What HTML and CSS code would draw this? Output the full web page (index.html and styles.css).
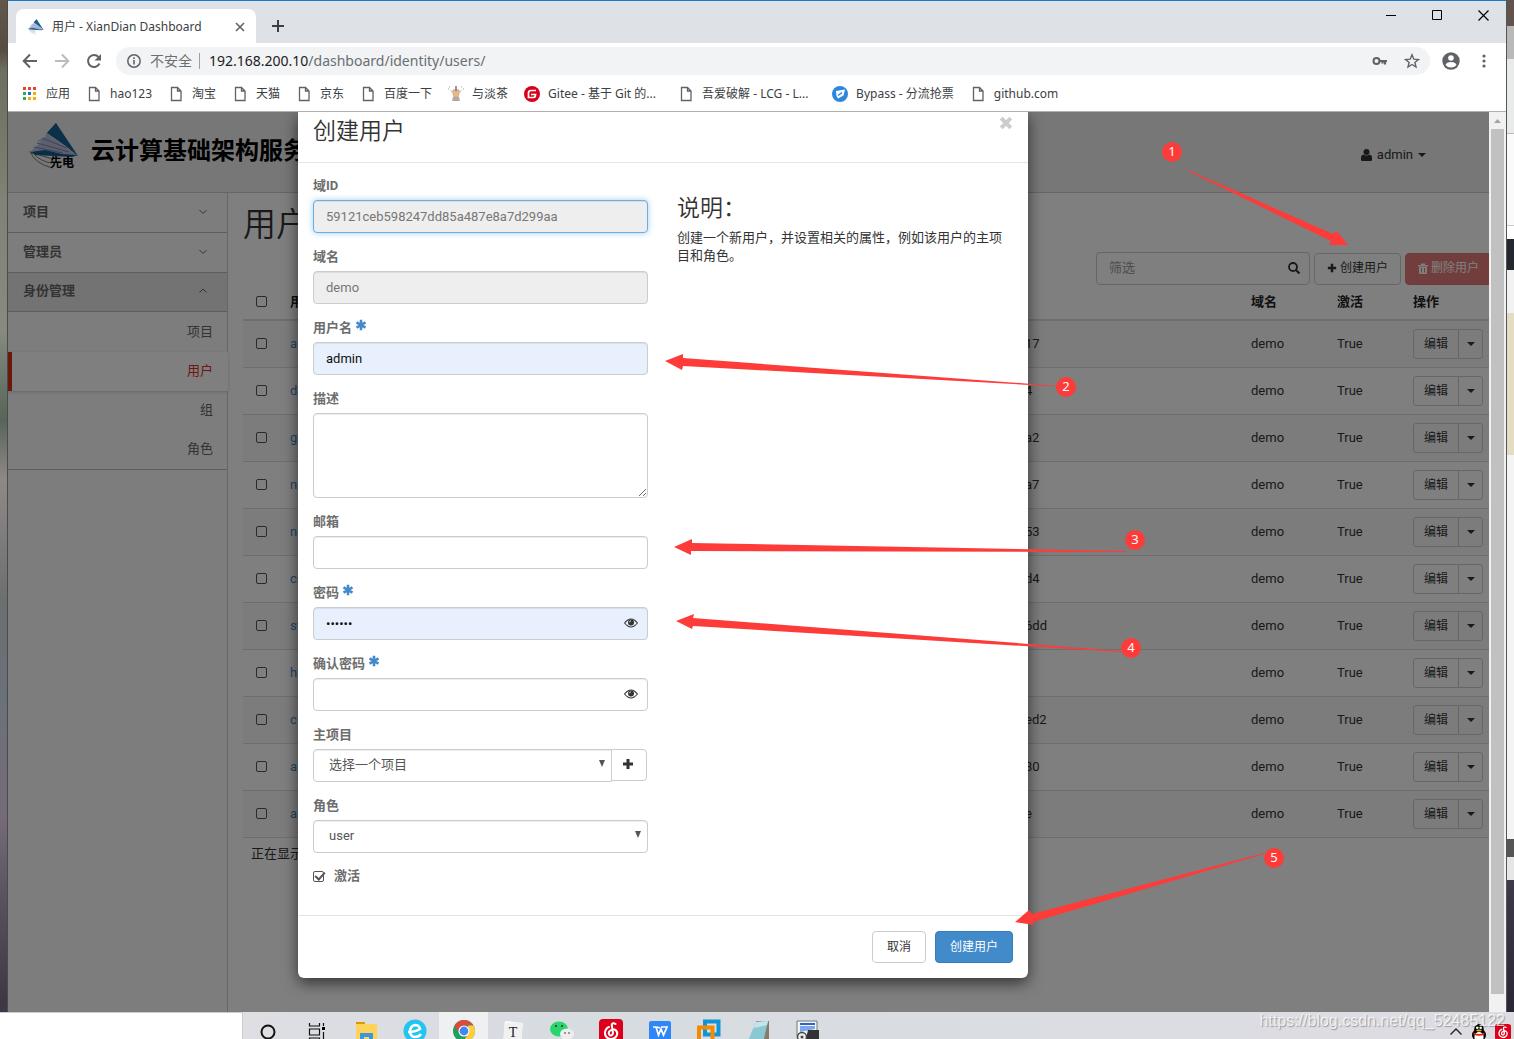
FILE: index.html
```html
<!DOCTYPE html>
<html lang="zh-CN">
<head>
<meta charset="utf-8">
<title>用户 - XianDian Dashboard</title>
<link rel="stylesheet" href="styles.css">
</head>
<body>
<svg class="symbols" aria-hidden="true">
  <symbol id="doc" viewBox="0 0 16 16"><path d="M3.500 1.500h6l3.500 3.500v9.500h-9.500zM9.500 1.500v3.500h3.500" fill="none" stroke="#5f6368" stroke-width="1.300"/></symbol>
  <symbol id="logo" viewBox="0 0 50 48">
    <path d="M27 0 49 33 26 13 18 10z" fill="#17608f"/>
    <path d="M17 10 48 32 24 31 2 28 12 19 8 18 16 14z" fill="#b9bfdc"/>
    <path d="M27 0 33 17 49 33 38 24 18 10z" fill="#17608f"/>
    <path d="M13 15 38 25M8 20 40 29M5 24 34 30" stroke="#7d84ad" stroke-width="1" fill="none"/>
    <path d="M1 29 16 27 33 31 49 32 43 34 6 32z" fill="#115a8c"/>
    <path d="M1 28Q5 40 23 45M4 30Q12 39 23 40M10 32 24 36" stroke="#777" fill="none"/>
  </symbol>
  <symbol id="star" viewBox="0 0 12 12"><path d="M6 .8v10.400M1.500 3.400l9 5.200M10.500 3.400l-9 5.200" stroke="#428bca" stroke-width="2.600"/></symbol>
  <symbol id="eye" viewBox="0 0 14 10"><path d="M.6 5Q7-3 13.400 5 7 13 .6 5z" fill="none" stroke="#333" stroke-width="1.100"/><circle cx="7" cy="4.500" r="3" fill="#333"/><path d="M5.400 4.300Q5.500 3 7 2.900" fill="none" stroke="#fff" stroke-width=".8"/></symbol>
  <symbol id="plus" viewBox="0 0 12 12"><path d="M6 1v10M1 6h10" stroke="#333" stroke-width="3"/></symbol>
  <symbol id="netease" viewBox="0 0 24 24"><rect width="24" height="24" rx="4" fill="#dd001b"/><path d="M16.500 5Q13.500 3 12.700 6L14 14Q13.500 17 11 16.300 9 15 10.200 12.500 12 10 15.500 10.500 19 12 18 16 16 20.500 11 20 5.500 18.500 6 13 7 8.800 10 8" fill="none" stroke="#fff" stroke-width="2" stroke-linecap="round"/></symbol>
</svg>

<div class="desktop">
  <div class="edge edge-left"></div>

  <section class="window">
    <div class="tabstrip">
      <div class="tab">
        <svg class="i16"><use href="#logo"/></svg>
        <span class="tab-title">用户 - XianDian Dashboard</span>
        <button class="plain" aria-label="关闭标签页"><svg width="10" height="10" viewBox="0 0 10 10"><path d="M1 1l8 8M9 1l-8 8" stroke="#5f6368" stroke-width="1.600"/></svg></button>
      </div>
      <button class="plain newtab" aria-label="新标签页"><svg width="12" height="12" viewBox="0 0 12 12"><path d="M6 0v12M0 6h12" stroke="#3c4043" stroke-width="2"/></svg></button>
      <div class="wincontrols">
        <button class="plain" aria-label="最小化"><svg width="11" height="11"><path d="M0 5.500h10" stroke="#000"/></svg></button>
        <button class="plain" aria-label="最大化"><svg width="11" height="11"><path d="M.5.5h9v9h-9z" fill="none" stroke="#000"/></svg></button>
        <button class="plain" aria-label="关闭"><svg width="11" height="11"><path d="M.5.5l10 10M10.500.5l-10 10" stroke="#000" stroke-width="1.200"/></svg></button>
      </div>
    </div>

    <div class="toolbar">
      <button class="plain" aria-label="后退"><svg class="i16" viewBox="0 0 16 16"><path d="M15 8H2M8 1.500 1.700 8 8 14.500" fill="none" stroke="#5f6368" stroke-width="2"/></svg></button>
      <button class="plain" aria-label="前进"><svg class="i16" viewBox="0 0 16 16"><path d="M1 8h13M8 1.500 14.300 8 8 14.500" fill="none" stroke="#babcbe" stroke-width="2"/></svg></button>
      <button class="plain" aria-label="重新加载"><svg class="i16" viewBox="0 0 16 16"><path d="M13.500 10.500A6 6 0 1 1 12.500 4" fill="none" stroke="#5f6368" stroke-width="2"/><path d="M15 1v6.500H8.500z" fill="#5f6368"/></svg></button>
      <div class="omnibox">
        <svg width="14" height="14" viewBox="0 0 14 14"><circle cx="7" cy="7" r="6.200" fill="none" stroke="#5f6368" stroke-width="1.500"/><path d="M7 6v4.500M7 3.300v1.600" stroke="#5f6368" stroke-width="1.600"/></svg>
        <span class="insecure">不安全</span>
        <span class="url"><b>192.168.200.10</b>/dashboard/identity/users/</span>
        <svg class="i16" viewBox="0 0 16 16"><circle cx="4.500" cy="8" r="3" fill="none" stroke="#5f6368" stroke-width="2"/><path d="M7 8h8M13 8v3.500M10.500 8v2.500" stroke="#5f6368" stroke-width="2.200" fill="none"/></svg>
        <svg class="i16" viewBox="0 0 16 16"><path d="M8 1.800 9.800 6.200 14.500 6.500 10.900 9.500 12 14 8 11.500 4 14 5.100 9.500 1.500 6.500 6.200 6.200z" fill="none" stroke="#5f6368" stroke-width="1.400"/></svg>
      </div>
      <svg width="18" height="18" viewBox="0 0 18 18"><circle cx="9" cy="9" r="8.700" fill="#5f6368"/><circle cx="9" cy="6" r="2.800" fill="#fff"/><path d="M3.500 13Q4.500 10 9 10t5.500 3Q12.500 15.500 9 15.500T3.500 13z" fill="#fff"/></svg>
      <svg class="i16" viewBox="0 0 16 16"><g fill="#5f6368"><circle cx="8" cy="3" r="1.600"/><circle cx="8" cy="8" r="1.600"/><circle cx="8" cy="13" r="1.600"/></g></svg>
    </div>

    <nav class="bookmarks">
      <a href="#"><svg class="i16" viewBox="0 0 16 16"><path fill="#ea4335" d="M1 1h3v3H1zM6 1h3v3H6zM11 1h3v3h-3z"/><path fill="#34a853" d="M1 6h3v3H1zM1 11h3v3H1z"/><path fill="#1a73e8" d="M6 6h3v3H6z"/><path fill="#fbab05" d="M11 6h3v3h-3zM6 11h3v3H6zM11 11h3v3h-3z"/></svg>应用</a>
      <a href="#"><svg class="i16"><use href="#doc"/></svg>hao123</a>
      <a href="#"><svg class="i16"><use href="#doc"/></svg>淘宝</a>
      <a href="#"><svg class="i16"><use href="#doc"/></svg>天猫</a>
      <a href="#"><svg class="i16"><use href="#doc"/></svg>京东</a>
      <a href="#"><svg class="i16"><use href="#doc"/></svg>百度一下</a>
      <a href="#"><svg class="i16" viewBox="0 0 16 16"><path d="M5 4h6v3l-1 4H6L5 7zM2.500 4.500 5.500 7M13.500 4.500l-3 2.500" fill="#e5b98e" stroke="#d9a980"/><path d="M7.300 0h1.400v5H7.300z" fill="#6b6a8c"/><path d="M5 11h6l1 4H4z" fill="#b5a8a0"/><path d="M1 1h1M13 1h1M0 3h1M15 3h1" stroke="#aaa"/></svg>与淡茶</a>
      <a class="long" href="#"><svg class="i16" viewBox="0 0 16 16"><circle cx="8" cy="8" r="8" fill="#d9001b"/><path d="M12 4.500H7Q4.500 4.500 4.500 7v4.500H9.500Q11.500 11.500 11.500 8.500H7" fill="none" stroke="#fff" stroke-width="1.700"/></svg>Gitee - 基于 Git 的...</a>
      <a class="long" href="#"><svg class="i16"><use href="#doc"/></svg>吾爱破解 - LCG - L...</a>
      <a href="#"><svg class="i16" viewBox="0 0 16 16"><circle cx="8" cy="8" r="8" fill="#2e86de"/><path d="M4 5l9-1.500-1.500 6L6 12.500 4.500 10z" fill="#fff"/><path d="M6 9.500l4-3" stroke="#2e86de" stroke-width="1.500"/></svg>Bypass - 分流抢票</a>
      <a href="#"><svg class="i16"><use href="#doc"/></svg>github.com</a>
    </nav>

    <div class="viewport">
      <div class="page">
        <header class="site-header">
          <div class="brand"><svg width="50" height="48"><use href="#logo"/></svg><small>先电</small></div>
          <strong class="brand-name">云计算基础架构服务</strong>
          <a class="user-menu" href="#"><svg width="11" height="12" viewBox="0 0 11 12"><circle cx="5.500" cy="3" r="3" fill="#333"/><path d="M0 11V8q0-2 2.500-2.500 3 2 6 0Q11 6 11 8v3q0 1-1 1H1q-1 0-1-1z" fill="#333"/></svg>admin<i class="caret"></i></a>
        </header>
        <div class="columns">
          <nav class="sidebar">
            <a class="panel" href="#">项目<svg width="8" height="8"><path d="M.5 2 4 5.500 7.500 2" fill="none" stroke="#666"/></svg></a>
            <a class="panel" href="#">管理员<svg width="8" height="8"><path d="M.5 2 4 5.500 7.500 2" fill="none" stroke="#666"/></svg></a>
            <a class="panel open" href="#">身份管理<svg width="8" height="8"><path d="M.5 5.500 4 2 7.500 5.500" fill="none" stroke="#666"/></svg></a>
            <div class="subnav">
              <a href="#">项目</a>
              <a class="active" href="#">用户</a>
              <a href="#">组</a>
              <a href="#">角色</a>
            </div>
          </nav>
          <main class="main">
            <h1>用户</h1>
            <div class="table-tools">
              <div class="filter"><input type="text" placeholder="筛选" aria-label="筛选"><svg width="12" height="12" viewBox="0 0 12 12"><circle cx="5" cy="5" r="4" fill="none" stroke="#333" stroke-width="1.800"/><path d="M8 8l3.500 3.500" stroke="#333" stroke-width="2.200"/></svg></div>
              <button class="btn"><svg width="10" height="10" viewBox="0 0 12 12"><use href="#plus" width="12" height="12"/></svg>创建用户</button>
              <button class="btn danger"><svg width="10" height="11" viewBox="0 0 10 11"><path d="M0 2h3V.5h4V2h3v1.500H0zM1 4h8v6q0 1-1 1H2q-1 0-1-1z" fill="#fff"/><path d="M3.500 5v4.500M6.500 5v4.500" stroke="#e0706c"/></svg>删除用户</button>
            </div>
            <table>
              <colgroup><col class="c-check"><col><col class="c-id"><col class="c-domain"><col class="c-active"><col class="c-action"></colgroup>
              <thead><tr><th><input type="checkbox" aria-label="全选"></th><th>用户名</th><th></th><th>域名</th><th>激活</th><th>操作</th></tr></thead>
              <tbody>
                <tr><td><input type="checkbox" aria-label="选择"></td><td><a href="#">a</a></td><td>17</td><td>demo</td><td>True</td><td><div class="split"><button>编辑</button><button aria-label="更多"><i class="caret"></i></button></div></td></tr>
                <tr><td><input type="checkbox" aria-label="选择"></td><td><a href="#">d</a></td><td>4</td><td>demo</td><td>True</td><td><div class="split"><button>编辑</button><button aria-label="更多"><i class="caret"></i></button></div></td></tr>
                <tr><td><input type="checkbox" aria-label="选择"></td><td><a href="#">g</a></td><td>a2</td><td>demo</td><td>True</td><td><div class="split"><button>编辑</button><button aria-label="更多"><i class="caret"></i></button></div></td></tr>
                <tr><td><input type="checkbox" aria-label="选择"></td><td><a href="#">n</a></td><td>a7</td><td>demo</td><td>True</td><td><div class="split"><button>编辑</button><button aria-label="更多"><i class="caret"></i></button></div></td></tr>
                <tr><td><input type="checkbox" aria-label="选择"></td><td><a href="#">n</a></td><td>53</td><td>demo</td><td>True</td><td><div class="split"><button>编辑</button><button aria-label="更多"><i class="caret"></i></button></div></td></tr>
                <tr><td><input type="checkbox" aria-label="选择"></td><td><a href="#">ci</a></td><td>d4</td><td>demo</td><td>True</td><td><div class="split"><button>编辑</button><button aria-label="更多"><i class="caret"></i></button></div></td></tr>
                <tr><td><input type="checkbox" aria-label="选择"></td><td><a href="#">sw</a></td><td>6dd</td><td>demo</td><td>True</td><td><div class="split"><button>编辑</button><button aria-label="更多"><i class="caret"></i></button></div></td></tr>
                <tr><td><input type="checkbox" aria-label="选择"></td><td><a href="#">h</a></td><td></td><td>demo</td><td>True</td><td><div class="split"><button>编辑</button><button aria-label="更多"><i class="caret"></i></button></div></td></tr>
                <tr><td><input type="checkbox" aria-label="选择"></td><td><a href="#">c</a></td><td>ed2</td><td>demo</td><td>True</td><td><div class="split"><button>编辑</button><button aria-label="更多"><i class="caret"></i></button></div></td></tr>
                <tr><td><input type="checkbox" aria-label="选择"></td><td><a href="#">a</a></td><td>30</td><td>demo</td><td>True</td><td><div class="split"><button>编辑</button><button aria-label="更多"><i class="caret"></i></button></div></td></tr>
                <tr><td><input type="checkbox" aria-label="选择"></td><td><a href="#">a</a></td><td>e</td><td>demo</td><td>True</td><td><div class="split"><button>编辑</button><button aria-label="更多"><i class="caret"></i></button></div></td></tr>
              </tbody>
            </table>
            <p class="count">正在显示</p>
          </main>
        </div>

        <div class="backdrop">
          <form class="modal">
            <div class="modal-header"><h2>创建用户</h2><button type="button" class="plain close" aria-label="关闭"><svg width="14" height="14" viewBox="0 0 14 14"><path d="M2.200 2.200l9.600 9.600M11.800 2.200l-9.600 9.600" stroke="#ccc" stroke-width="4"/></svg></button></div>
            <div class="modal-body">
              <div class="fields">
                <div class="field"><label for="did">域ID</label><input class="control focus" id="did" type="text" value="59121ceb598247dd85a487e8a7d299aa" readonly></div>
                <div class="field"><label for="dname">域名</label><input class="control" id="dname" type="text" value="demo" readonly></div>
                <div class="field"><label for="uname">用户名<svg width="12" height="12"><use href="#star"/></svg></label><input class="control filled" id="uname" type="text" value="admin"></div>
                <div class="field"><label for="desc">描述</label><textarea class="control" id="desc"></textarea></div>
                <div class="field"><label for="mail">邮箱</label><input class="control" id="mail" type="text"></div>
                <div class="field"><label for="pw">密码<svg width="12" height="12"><use href="#star"/></svg></label><div class="wrap"><input class="control filled" id="pw" type="password" value="123456"><svg class="eye" width="14" height="10"><use href="#eye"/></svg></div></div>
                <div class="field"><label for="pw2">确认密码<svg width="12" height="12"><use href="#star"/></svg></label><div class="wrap"><input class="control" id="pw2" type="password"><svg class="eye" width="14" height="10"><use href="#eye"/></svg></div></div>
                <div class="field"><label for="proj">主项目</label><div class="group"><div class="wrap"><select class="control" id="proj"><option>选择一个项目</option></select><svg class="arrow" width="6" height="8"><path d="M0 0h6L3 7z" fill="#555"/></svg></div><button type="button" class="add" aria-label="添加项目"><svg width="12" height="12"><use href="#plus"/></svg></button></div></div>
                <div class="field"><label for="role">角色</label><div class="wrap"><select class="control" id="role"><option>user</option></select><svg class="arrow" width="6" height="8"><path d="M0 0h6L3 7z" fill="#555"/></svg></div></div>
                <label class="check"><input type="checkbox" checked>激活</label>
              </div>
              <div class="help"><h3>说明：</h3><p>创建一个新用户，并设置相关的属性，例如该用户的主项目和角色。</p></div>
            </div>
            <div class="modal-footer"><button type="button" class="btn">取消</button><button type="button" class="btn primary">创建用户</button></div>
          </form>
        </div>
      </div>
      <div class="scrollbar"><svg width="7" height="4"><path d="M0 4h7L3.500 0z" fill="#a3a3a3"/></svg><div class="thumb"></div></div>
    </div>
  </section>

  <div class="edge edge-right"></div>
</div>

<footer class="taskbar">
  <div class="search"></div>
  <div class="apps">
    <button class="plain"><svg viewBox="0 0 24 24"><circle cx="12" cy="13" r="6.500" fill="none" stroke="#111" stroke-width="2"/></svg></button>
    <button class="plain"><svg viewBox="0 0 24 24"><path d="M4.500 4v3h10V4M4.500 10h10v6h-10zM4.500 21v-2h10v2M18.500 4v3M18.500 13v8" fill="none" stroke="#111" stroke-width="1.200"/><path d="M17 8h3v3h-3z"/></svg></button>
    <button class="plain"><svg viewBox="0 0 24 24"><path d="M2 3h9v3H2z" fill="#d99a06"/><path d="M2 5h21v19H2z" fill="#ffd35a"/><path d="M6 14h13v10H6z" fill="#3a96dd"/><path d="M10 18h5v6h-5z" fill="#ffd35a"/></svg></button>
    <button class="plain"><svg viewBox="0 0 24 24"><circle cx="12" cy="12" r="11.500" fill="#23c4ef"/><path d="M5 13Q12 13 17 10 16 6 12 6 7 7 7 13q1 5 5 5 4 0 6-3" fill="none" stroke="#fff" stroke-width="2.600"/></svg></button>
    <button class="plain current"><svg viewBox="0 0 24 24"><circle cx="12" cy="12" r="11" fill="#1fa15d"/><path d="M2.500 6.500A11 11 0 0 1 21.500 6.500H12L7 14z" fill="#dd4b3e"/><path d="M21.500 6.500A11 11 0 0 1 11 23L16.500 14 16 6.500z" fill="#ffcd40"/><circle cx="12" cy="12" r="5.500" fill="#fff"/><circle cx="12" cy="12" r="4.400" fill="#4285f4"/></svg></button>
    <button class="plain"><svg viewBox="0 0 24 24"><path d="M4 2 22 4 20 24H2z" fill="#fafafa"/><path d="M3 4h18v20H3z" fill="#f1f1f1"/><text x="12" y="18" text-anchor="middle" font-family="Liberation Serif" font-size="14" fill="#222">T</text></svg></button>
    <button class="plain"><svg viewBox="0 0 24 24"><ellipse cx="9" cy="10" rx="9" ry="7.500" fill="#2bd46c"/><ellipse cx="17" cy="15" rx="7" ry="5.500" fill="#eee"/><g fill="#333"><circle cx="6" cy="7" r="1"/><circle cx="12" cy="7" r="1"/><circle cx="15" cy="14" r=".8"/><circle cx="19" cy="14" r=".8"/></g></svg></button>
    <button class="plain"><svg viewBox="0 0 24 24"><use href="#netease"/></svg></button>
    <button class="plain"><svg viewBox="0 0 24 24"><rect x="1" y="2" width="22" height="22" rx="2" fill="#2f86f6"/><path d="M5 8h3l2.500 8 2.500-6 2.500 6 3.500-8h-6M9 8l3 1" fill="none" stroke="#fff" stroke-width="1.700"/></svg></button>
    <button class="plain"><svg viewBox="0 0 24 24"><path d="M8 2.500h13.500v13H8z" fill="none" stroke="#0f95d7" stroke-width="4"/><path d="M2 8.500h13.500v14H2z" fill="none" stroke="#f38b00" stroke-width="4"/></svg></button>
    <button class="plain"><svg viewBox="0 0 24 24"><path d="M10 2h13v20l-3 2z" fill="#877b6a"/><path d="M10 3 22 2 17 24H1z" fill="#8cc7d4"/><path d="M10 3 22 2 21 6 8 9z" fill="#c5e5ea"/></svg></button>
    <button class="plain"><svg viewBox="0 0 24 24"><path d="M2 2h20v15H2z" fill="#f3f3f3" stroke="#777"/><path d="M5 4h15v2H5z" fill="#2d62d0"/><path d="M5 7h15v3L5 13z" fill="#7ea6e8"/><path d="M13 11h11v13H10z" fill="#333"/><circle cx="7" cy="18" r="4.500" fill="#eee" stroke="#444" stroke-width="1.500"/><circle cx="7" cy="18" r="1.500" fill="#444"/></svg></button>
  </div>
  <div class="tray">
    <svg width="14" height="14"><path d="M1.500 10.500 7 5l5.500 5.500" fill="none" stroke="#222" stroke-width="1.400"/></svg>
    <svg width="16" height="18" viewBox="0 0 16 18"><ellipse cx="8" cy="11" rx="7" ry="6.500"/><ellipse cx="8" cy="5.500" rx="4.800" ry="5.500"/><ellipse cx="8" cy="13" rx="4.600" ry="5" fill="#fff"/><circle cx="6.300" cy="3.800" r="1.300" fill="#fff"/><circle cx="9.700" cy="3.800" r="1.300" fill="#fff"/><ellipse cx="8" cy="6.500" rx="2.800" ry="1" fill="#f6b100"/><path d="M2.500 8.500q5.500 3 11 0v2q-5.500 2.500-11 0z" fill="#e8201c"/></svg>
    <svg width="16" height="16"><use href="#netease"/></svg>
  </div>
  <span class="watermark">https://blog.csdn.net/qq_52485122</span>
</footer>

<svg class="annotations" width="1514" height="1039">
  <g fill="#fd3c39">
    <path d="M1187 169.500 1333 234 1337 231 1348 245H1329L1331 241 1187 170.500z"/>
    <path d="M665 361 683 354V358L1085 388 683 366 682 370z"/>
    <path d="M674 547 692 539V543L1126 551V552L691 551V555z"/>
    <path d="M676 621 694 614 693 618 1121 651V652L693 626 692 629z"/>
    <path d="M1015 922 1029 910 1032 914 1264 853V854L1033 922 1034 925z"/>
    <circle cx="1172" cy="152" r="10"/><circle cx="1066" cy="387" r="10"/><circle cx="1135" cy="540" r="10"/><circle cx="1131" cy="648" r="10"/><circle cx="1274" cy="858" r="10"/>
  </g>
  <g class="num"><text x="1172" y="156">1</text><text x="1066" y="391">2</text><text x="1135" y="544">3</text><text x="1131" y="652">4</text><text x="1274" y="862">5</text></g>
</svg>
</body>
</html>
```
FILE: styles.css
```css
* { box-sizing: border-box; }

body {
  margin: 0;
  height: 100vh;
  overflow: hidden;
  position: relative;
  display: flex;
  flex-direction: column;
  font: 12px/18px "Noto Sans", "Noto Sans CJK SC", sans-serif;
  color: #3c4043;
}

a { color: inherit; text-decoration: none; }
h1, h2, h3, p { margin: 0; font-weight: 350; }
button, input, select, textarea { font: inherit; color: inherit; margin: 0; }
svg { display: block; flex: none; }
.symbols { position: absolute; width: 0; height: 0; }
.i16 { width: 16px; height: 16px; }
.plain { border: 0; background: none; padding: 0; display: grid; place-items: center; }

/* desktop */
.desktop { flex: 1; min-height: 0; display: flex; }
.edge { width: 8px; flex: none; }
.edge-left {
  border-right: 1px solid #4b4b4b;
  background: linear-gradient(#63574c 0, #574c41 50px, #6d6f5e 70px, #7f8274 200px, #878a80 330px, #566659 420px, #8e8987 480px, #6c6f70 600px, #6b717a 700px, #756b78 820px, #5a515f 900px, #3e3846 1000px);
}
.edge-right {
  border-left: 1px solid #555;
  background: linear-gradient(#63534f 26px, #b9b9b9 26px 59px, #e9ebeb 59px 133px, #bbb 133px 134px, #fafafa 134px 225px, #ccc 225px 226px, #fff 226px 239px, #23282f 239px 270px, #f2f2f2 270px 313px, #e4dcc3 313px 455px, #f4f4f4 455px 839px, #555 839px 857px, #e6e6e6 857px 880px, #3f3a49 880px, #2b2636);
}

/* browser window */
.window { flex: 1; min-width: 0; display: flex; flex-direction: column; background: #fff; border-top: 1px solid #1979ca; }
.tabstrip { height: 42px; background: #dee1e6; display: flex; align-items: flex-end; padding-left: 8px; }
.tab { width: 240px; height: 34px; background: #fff; border-radius: 8px 8px 0 0; display: flex; align-items: center; gap: 8px; padding: 2px 11px 0 12px; }
.tab-title { flex: 1; white-space: nowrap; }
.newtab { width: 44px; height: 34px; }
.wincontrols { margin-left: auto; align-self: flex-start; display: flex; }
.wincontrols button { width: 46px; height: 28px; }
.toolbar { height: 36px; display: flex; align-items: center; gap: 16px; padding: 0 14px; }
.omnibox { flex: 1; height: 28px; margin: 0 -4px 0 -2px; border-radius: 14px; background: #f1f3f4; display: flex; align-items: center; gap: 16px; padding: 0 10px 0 11px; font-size: 14px; color: #6b6f73; }
.insecure { margin: 0 -7px; padding-right: 7px; border-right: 1px solid #9aa0a6; line-height: 16px; }
.url { flex: 1; }
.url b { font-weight: 400; color: #202124; }
.bookmarks { height: 33px; border-bottom: 1px solid #b0b0b0; display: flex; align-items: center; gap: 16px; padding: 0 14px 2px; white-space: nowrap; }
.bookmarks a { display: flex; align-items: center; gap: 8px; }
.bookmarks .long { width: 138px; }

/* web page */
.viewport { flex: 1; min-height: 0; display: flex; }
.page { flex: 1; min-width: 0; position: relative; overflow: hidden; display: flex; flex-direction: column; background: #fff; font: 13px/18px Roboto, "Noto Sans CJK SC", sans-serif; color: #333; }
.scrollbar { width: 17px; background: #f1f1f1; display: flex; flex-direction: column; align-items: center; padding: 7px 2px 18px; gap: 6px; }
.thumb { flex: 1; width: 13px; background: #c1c1c1; }
.site-header { height: 81px; background: #eee; border-bottom: 1px solid #ccc; display: flex; align-items: center; padding: 0 63px 10px 21px; }
.brand { position: relative; }
.brand small { position: absolute; left: 21px; top: 31px; font: 700 12px/16px "Noto Sans CJK SC", sans-serif; color: #000; }
.brand-name { margin-left: 12px; padding-top: 8px; font-size: 24px; line-height: 30px; font-weight: 700; color: #000; white-space: nowrap; }
.user-menu { margin-left: auto; padding-top: 15px; display: flex; align-items: center; gap: 5px; }
.caret { display: block; border: 4px solid transparent; border-top-color: #333; border-bottom: 0; }
.columns { flex: 1; min-height: 0; display: flex; }

.sidebar { width: 220px; flex: none; background: #fafafa; border-right: 1px solid #ccc; color: #666; }
.panel { height: 40px; border-bottom: 1px solid #bbb; display: flex; align-items: center; justify-content: space-between; padding: 0 20px 2px 15px; font-weight: 700; }
.open { height: 39px; background: #e6e6e6; }
.subnav { border-bottom: 1px solid #bbb; padding-top: 1px; }
.subnav a { display: block; height: 39px; line-height: 38px; padding-right: 14px; text-align: right; }
.subnav .active { margin-right: -1px; padding-right: 15px; background: #fff; border-left: 4px solid #d9301c; color: #d9301c; box-shadow: 0 1px 3px #ccc; }

.main { flex: 1; min-width: 0; padding: 9px 0 0 15px; }
.main h1 { font-size: 33px; line-height: 46px; }
.table-tools { display: flex; justify-content: flex-end; align-items: center; gap: 4px; margin: 4px -3px 0 0; }
.filter { width: 214px; height: 33px; display: flex; align-items: center; border: 1px solid #ccc; border-radius: 4px; padding: 0 9px 2px 12px; }
.filter input { flex: 1; min-width: 0; border: 0; padding: 0; background: none; outline: 0; }
.filter input::placeholder { color: #999; }
.btn { height: 32px; padding: 0 12px 1px; border: 1px solid #ccc; border-radius: 4px; background: #fff; font-size: 12px; display: flex; align-items: center; gap: 3px; white-space: nowrap; }
.danger { background: #e0706c; border-color: #dd6a66; color: #fff; opacity: .9; }
.primary { background: #428bca; border-color: #357ebd; color: #fff; }

table { width: 100%; table-layout: fixed; border-collapse: collapse; }
.c-check { width: 39px; }
.c-id { width: 226px; }
.c-domain { width: 86px; }
.c-active { width: 76px; }
.c-action { width: 84px; }
th, td { padding: 0 8px; text-align: left; }
th { height: 35px; padding-bottom: 1px; border-bottom: 2px solid #ddd; color: #222; }
td { height: 47px; border-bottom: 1px solid #ddd; }
tbody tr:nth-child(odd) { background: #f9f9f9; }
td a { color: #428bca; }
input[type="checkbox"] { appearance: none; display: block; position: relative; width: 11px; height: 11px; border: 1px solid #555; border-radius: 2px; }
th input, td input { margin-left: 5px; }
.split { display: flex; width: 70px; }
.split button { height: 30px; border: 1px solid #ccc; background: none; padding: 0; font-size: 12px; display: grid; place-items: center; }
.split button:first-child { width: 46px; border-radius: 3px 0 0 3px; }
.split button:last-child { width: 25px; flex: none; margin-left: -1px; border-radius: 0 3px 3px 0; }
.count { padding: 7px 8px; font-weight: 400; }

/* dialog */
.backdrop { position: absolute; inset: 0; background: rgba(0, 0, 0, .5); padding-left: 290px; }
.modal { width: 730px; background: #fff; border-radius: 0 0 6px 6px; box-shadow: 0 5px 15px rgba(0, 0, 0, .6); }
.modal-header { height: 51px; border-bottom: 1px solid #e5e5e5; padding: 4px 15px; display: flex; justify-content: space-between; align-items: flex-start; }
.modal-header h2, .help h3 { font-size: 23px; line-height: 32px; }
.modal-body { display: grid; grid-template-columns: 335px 1fr; gap: 29px; padding: 14px 15px; }
.field { margin-bottom: 15px; }
.fields label { display: flex; gap: 3px; height: 18px; margin-bottom: 5px; font-weight: 700; color: #6d6d6d; }
.control { display: block; width: 100%; height: 33px; padding: 0 12px; border: 1px solid #ccc; border-radius: 4px; background: #fff; color: #555; outline: 0; box-shadow: inset 0 1px 1px rgba(0, 0, 0, .075); }
.control[readonly] { background: #eee; color: #777; }
.control.focus { border-color: #66afe9; box-shadow: inset 0 1px 1px rgba(0, 0, 0, .075), 0 0 6px rgba(102, 175, 233, .6); }
.control.filled { background: #e8f0fe; color: #111; }
textarea.control { height: 85px; resize: vertical; }
select.control { appearance: none; padding: 0 15px 2px; }
.wrap { position: relative; flex: 1; }
.eye { position: absolute; right: 10px; top: 11px; }
.arrow { position: absolute; right: 7px; top: 11px; }
.group { display: flex; padding-right: 1px; }
.group .control { border-radius: 4px 0 0 4px; }
.add { width: 36px; height: 32px; margin-left: -1px; border: 1px solid #ccc; border-radius: 0 4px 4px 0; background: #fff; padding: 0 2px 2px 0; display: grid; place-items: center; }
.fields .check { align-items: center; gap: 10px; margin: -1px 0 16px; }
.check input::before { content: ""; position: absolute; left: 3px; top: -2px; width: 4px; height: 8px; border: solid #555; border-width: 0 2px 2px 0; transform: rotate(42deg); }
.help { padding-top: 16px; }
.help p { margin-top: 4px; font-weight: 400; }
.modal-footer { border-top: 1px solid #e5e5e5; padding: 15px; display: flex; justify-content: flex-end; gap: 9px; }
.modal-footer .btn { padding: 0 14px 1px; }

/* taskbar */
.taskbar { height: 27px; flex: none; position: relative; overflow: hidden; display: flex; background: linear-gradient(90deg, #dedee3 240px, #d7dce0 560px, #d9dde1 900px, #dedce3); }
.search { width: 243px; background: #fff; border-top: 1px solid #ccc; border-right: 1px solid #ccc; }
.apps { display: flex; flex: 1; }
.apps button { width: 49px; height: 38px; }
.apps svg { width: 24px; height: 24px; }
.apps .current { background: #eef0f2; }
.tray { display: flex; gap: 8px; padding: 12px 3px 0 0; }
.watermark { position: absolute; right: 9px; top: 0; font: 16px/17px "Liberation Sans", sans-serif; color: rgba(255, 255, 255, .75); text-shadow: 1px 1px 1px rgba(0, 0, 0, .3); }

/* numbered steps drawn over the screen */
.annotations { position: absolute; left: 0; top: 0; pointer-events: none; }
.num { fill: #fff; font: 13px "Noto Sans", sans-serif; text-anchor: middle; }
```
